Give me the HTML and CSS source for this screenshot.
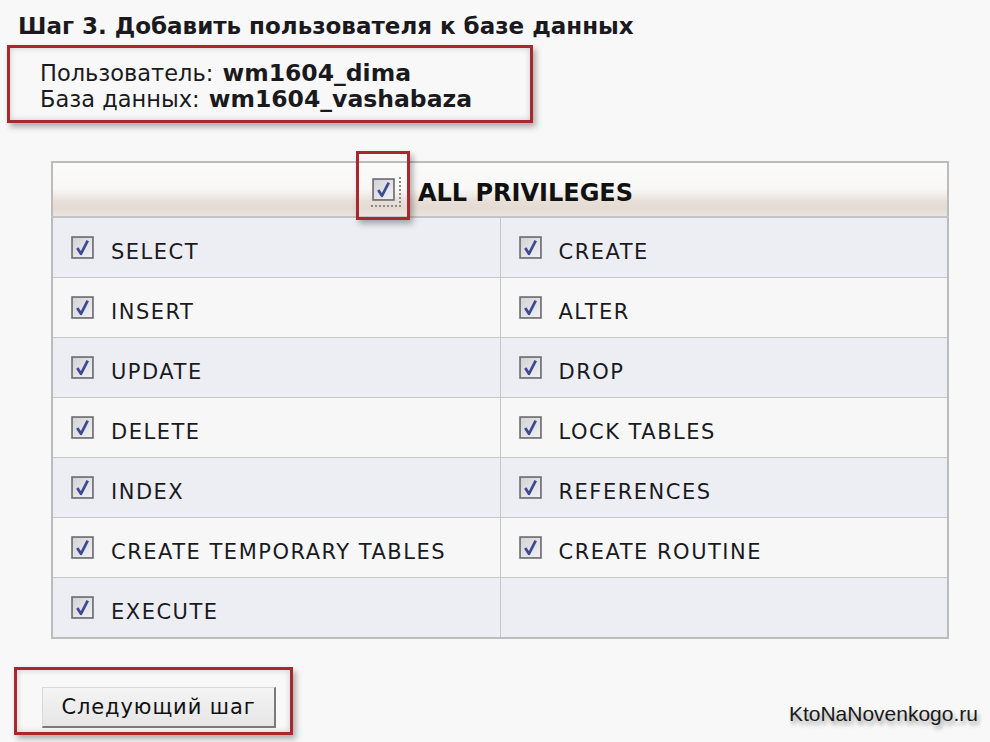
FILE: index.html
```html
<!DOCTYPE html>
<html lang="ru">
<head>
<meta charset="UTF-8">
<meta name="viewport" content="width=device-width, initial-scale=1.0">
<title>Шаг 3. Добавить пользователя к базе данных</title>
<link rel="stylesheet" href="styles.css">
</head>
<body>

<svg width="0" height="0" class="defs">
  <defs>
    <linearGradient id="boxFill" x1="0" y1="0" x2="1" y2="1">
      <stop offset="0" stop-color="#d2d2d6"/>
      <stop offset="1" stop-color="#f2f2f4"/>
    </linearGradient>
    <symbol id="chk" viewBox="0 0 22 22">
      <rect x="1" y="1" width="20" height="20" fill="url(#boxFill)" stroke="#6e6e72" stroke-width="1.6"/>
      <path d="M6 11.5 L9.5 17 L16 4.5" fill="none" stroke="#3c4a94" stroke-width="2.6" stroke-linejoin="round"/>
    </symbol>
  </defs>
</svg>

<h1 class="title">Шаг 3. Добавить пользователя к базе данных</h1>

<div class="info highlight">
  <div>Пользователь: <b>wm1604_dima</b></div>
  <div>База данных: <b>wm1604_vashabaza</b></div>
</div>

<table class="privs">
  <thead>
    <tr>
      <th colspan="2">
        <span class="all">
          <span class="all-box"><svg class="cb"><use href="#chk"/></svg></span>
          ALL PRIVILEGES
        </span>
      </th>
    </tr>
  </thead>
  <tbody>
    <tr>
      <td><span class="opt"><svg class="cb"><use href="#chk"/></svg>SELECT</span></td>
      <td><span class="opt"><svg class="cb"><use href="#chk"/></svg>CREATE</span></td>
    </tr>
    <tr>
      <td><span class="opt"><svg class="cb"><use href="#chk"/></svg>INSERT</span></td>
      <td><span class="opt"><svg class="cb"><use href="#chk"/></svg>ALTER</span></td>
    </tr>
    <tr>
      <td><span class="opt"><svg class="cb"><use href="#chk"/></svg>UPDATE</span></td>
      <td><span class="opt"><svg class="cb"><use href="#chk"/></svg>DROP</span></td>
    </tr>
    <tr>
      <td><span class="opt"><svg class="cb"><use href="#chk"/></svg>DELETE</span></td>
      <td><span class="opt"><svg class="cb"><use href="#chk"/></svg>LOCK TABLES</span></td>
    </tr>
    <tr>
      <td><span class="opt"><svg class="cb"><use href="#chk"/></svg>INDEX</span></td>
      <td><span class="opt"><svg class="cb"><use href="#chk"/></svg>REFERENCES</span></td>
    </tr>
    <tr>
      <td><span class="opt"><svg class="cb"><use href="#chk"/></svg>CREATE TEMPORARY TABLES</span></td>
      <td><span class="opt"><svg class="cb"><use href="#chk"/></svg>CREATE ROUTINE</span></td>
    </tr>
    <tr>
      <td><span class="opt"><svg class="cb"><use href="#chk"/></svg>EXECUTE</span></td>
      <td></td>
    </tr>
  </tbody>
</table>

<div class="footer">
  <div class="btn-wrap highlight">
    <button class="next">Следующий шаг</button>
  </div>
  <div class="mark">KtoNaNovenkogo.ru</div>
</div>

</body>
</html>
```

FILE: styles.css
```css
body {
  margin: 0;
  background-color: #f8f8f8;
  font-family: "DejaVu Sans", Verdana, sans-serif;
  color: #1a1a1e;
  height: 742px;
  overflow: hidden;
}

.defs {
  position: absolute;
}

/* Title */
.title {
  margin: 0;
  padding: 13px 0 0 18px;
  font-size: 23px;
  line-height: 26px;
  font-weight: bold;
}

/* Red frames */
.highlight {
  border: 3px solid #a9272e;
  box-shadow: 3px 4px 6px rgba(0, 0, 0, 0.3), inset 0 0 6px rgba(0, 0, 0, 0.18);
  box-sizing: border-box;
}

.info {
  margin: 6px 0 0 7px;
  width: 526px;
  height: 78px;
  padding: 12px 0 0 30px;
  font-size: 22.5px;
  line-height: 26px;
}

.info b {
  font-size: 23.5px;
  margin-left: 2px;
}

/* Table */
.privs {
  margin: 38px 0 0 51px;
  width: 898px;
  border-collapse: collapse;
  border: 2px solid #bcbcbc;
  table-layout: fixed;
}

.privs th {
  height: 53px;
  padding: 0;
  border-bottom: 2px solid #c4c4c4;
  background: linear-gradient(to bottom, #fbfbfb 0%, #f8f7f6 50%, #e7dfd8 72%, #e4dbd3 85%, #ebe5e0 100%);
  font-size: 24px;
  font-weight: bold;
  color: #111;
}

.all {
  display: inline-flex;
  align-items: center;
  gap: 17px;
  margin: 6px 0 0 4px;
}

.all-box {
  position: relative;
  display: flex;
  padding: 1px 4px 4px 1px;
  border-right: 2px dotted #8a8a8a;
  border-bottom: 2px dotted #8a8a8a;
  margin-top: -2px;
}

.all-box::after {
  content: "";
  position: absolute;
  left: -15px;
  top: -26px;
  width: 48px;
  height: 63px;
  border: 3px solid #a9272e;
  box-shadow: 3px 4px 6px rgba(0, 0, 0, 0.3);
}

.privs td {
  height: 59px;
  padding: 0 0 0 18px;
  border: 1px solid #c6c6c6;
  vertical-align: top;
}

.privs tbody tr:nth-child(odd) {
  background-color: #eceef4;
}

.privs tbody tr:nth-child(even) {
  background-color: #f7f7f8;
}

.opt {
  display: flex;
  align-items: flex-start;
  gap: 17px;
  padding-top: 19px;
  font-size: 21px;
  letter-spacing: 1.5px;
  line-height: 30px;
}

.cb {
  width: 23px;
  height: 23px;
  flex: none;
}

.opt .cb {
  margin-top: -1px;
}

/* Footer */
.footer {
  display: flex;
  justify-content: space-between;
  align-items: flex-start;
  margin-top: 28px;
}

.btn-wrap {
  margin-left: 14px;
  width: 279px;
  height: 68px;
  padding: 17px 0 0 25px;
}

.next {
  width: 234px;
  height: 41px;
  padding: 0;
  background: linear-gradient(to bottom, #f4f4f4, #e6e6e6);
  border: 1px solid #d8d8d8;
  border-right: 2px solid #7a7a7a;
  border-bottom: 2px solid #7a7a7a;
  font-family: "DejaVu Sans", sans-serif;
  font-size: 21px;
  letter-spacing: 0.9px;
  color: #111;
}

.mark {
  margin: 35px 12px 0 0;
  font-family: "Liberation Sans", Arial, sans-serif;
  font-size: 21px;
  color: #1a1a1a;
  text-shadow: 2px 4px 4px rgba(0, 0, 0, 0.35);
}
```
